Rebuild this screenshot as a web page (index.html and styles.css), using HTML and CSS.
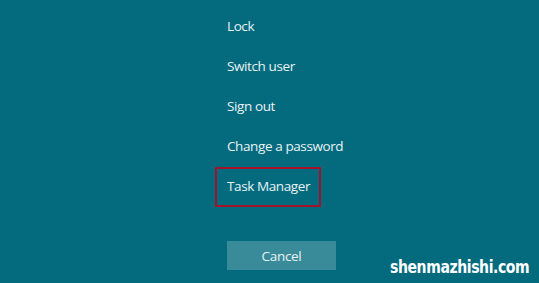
FILE: index.html
```html
<!DOCTYPE html>
<html>
<head>
<meta charset="utf-8">
<link rel="stylesheet" href="styles.css">
</head>
<body>
<div class="screen">
  <ul class="menu">
    <li class="item">Lock</li>
    <li class="item">Switch user</li>
    <li class="item">Sign out</li>
    <li class="item">Change a password</li>
    <li class="item item-selected">Task Manager</li>
  </ul>
  <button class="cancel">Cancel</button>
  <div class="watermark">shenmazhishi.com</div>
</div>
</body>
</html>
```
FILE: styles.css
```css
html, body {
  margin: 0;
  padding: 0;
  width: 539px;
  height: 283px;
  overflow: hidden;
  background: #046b7f;
}
.screen {
  position: relative;
  width: 539px;
  height: 283px;
  display: flex;
  flex-direction: column;
  align-items: flex-start;
  padding-top: 7px;
  box-sizing: border-box;
  font-family: "Open Sans", "Noto Sans", sans-serif;
  color: #e8f2f4;
}
.menu {
  list-style: none;
  margin: 0 0 0 215px;
  padding: 0;
  display: flex;
  flex-direction: column;
  align-items: flex-start;
}
.item {
  height: 40px;
  box-sizing: border-box;
  display: flex;
  align-items: center;
  padding: 0 9px 1px 10px;
  border: 2px solid transparent;
  font-size: 13.5px;
  letter-spacing: -0.4px;
  line-height: 1;
}
.item-selected {
  border-color: #a3122b;
}
.cancel {
  margin: 34px 0 0 227px;
  width: 109px;
  height: 29px;
  border: 0;
  padding: 0;
  background: #3a8b99;
  color: #e8f2f4;
  font-family: "Open Sans", "Noto Sans", sans-serif;
  font-size: 13.5px;
  letter-spacing: -0.3px;
}
.watermark {
  position: absolute;
  left: 390px;
  top: 257px;
  font-family: "DejaVu Sans", sans-serif;
  font-weight: bold;
  font-size: 17px;
  line-height: 20px;
  letter-spacing: -0.5px;
  color: #ffffff;
  transform: scaleX(0.825);
  transform-origin: left center;
  white-space: nowrap;
}
```
